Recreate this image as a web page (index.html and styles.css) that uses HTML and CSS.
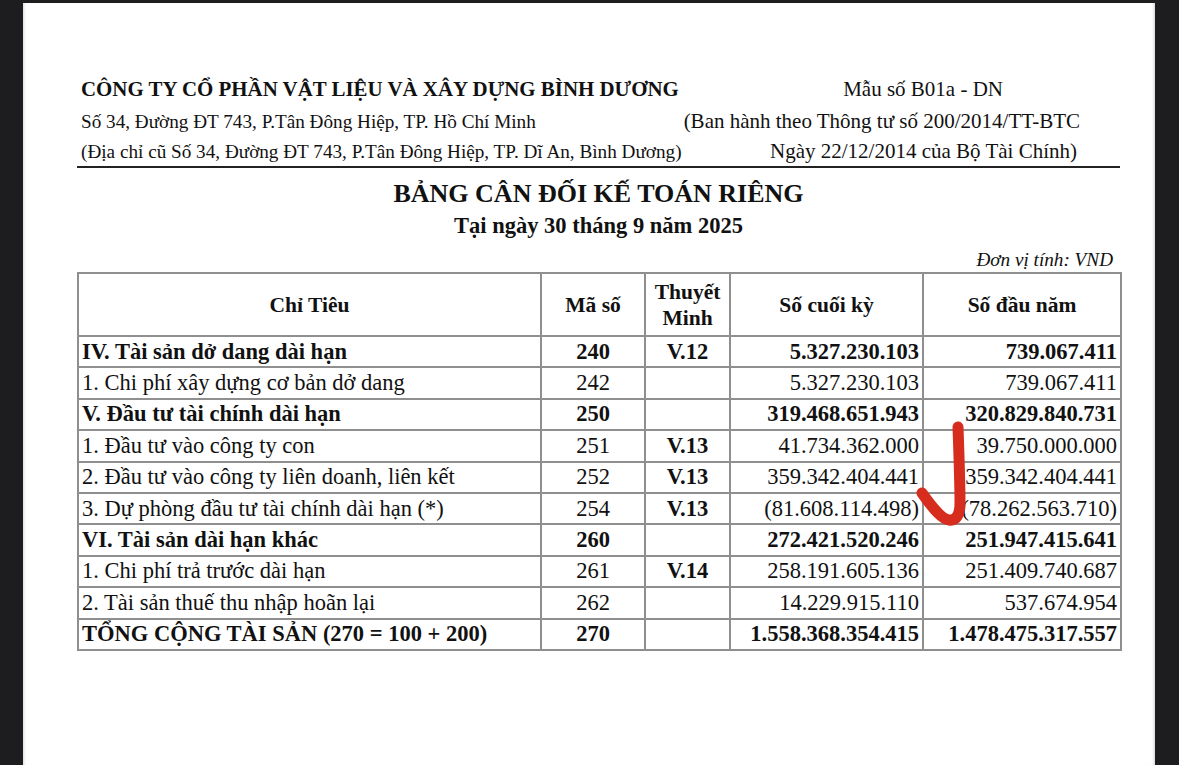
FILE: index.html
```html
<!DOCTYPE html>
<html lang="vi">
<head>
<meta charset="utf-8">
<title>Bảng cân đối kế toán riêng</title>
<link rel="stylesheet" href="styles.css">
</head>
<body>
<div class="page">
  <div class="doc">
    <header class="letterhead">
      <div class="lh-row">
        <span class="company">CÔNG TY CỔ PHẦN VẬT LIỆU VÀ XÂY DỰNG BÌNH DƯƠNG</span>
        <span class="right form-no">Mẫu số B01a - DN</span>
      </div>
      <div class="lh-row">
        <span>Số 34, Đường ĐT 743, P.Tân Đông Hiệp, TP. Hồ Chí Minh</span>
        <span class="right circular">(Ban hành theo Thông tư số 200/2014/TT-BTC</span>
      </div>
      <div class="lh-row lh-last">
        <span>(Địa chỉ cũ Số 34, Đường ĐT 743, P.Tân Đông Hiệp, TP. Dĩ An, Bình Dương)</span>
        <span class="right date">Ngày 22/12/2014 của Bộ Tài Chính)</span>
      </div>
    </header>

    <h1 class="title">BẢNG CÂN ĐỐI KẾ TOÁN RIÊNG</h1>
    <h2 class="subtitle">Tại ngày 30 tháng 9 năm 2025</h2>
    <div class="unit">Đơn vị tính: VND</div>

    <div class="table-wrap">
      <table class="sheet">
        <colgroup>
          <col class="c-name">
          <col class="c-code">
          <col class="c-note">
          <col class="c-end">
          <col class="c-start">
        </colgroup>
        <thead>
          <tr>
            <th>Chỉ Tiêu</th>
            <th>Mã số</th>
            <th>Thuyết<br>Minh</th>
            <th>Số cuối kỳ</th>
            <th>Số đầu năm</th>
          </tr>
        </thead>
        <tbody>
          <tr class="bold">
            <td class="name">IV. Tài sản dở dang dài hạn</td>
            <td class="ctr">240</td><td class="ctr">V.12</td>
            <td class="num">5.327.230.103</td><td class="num">739.067.411</td>
          </tr>
          <tr>
            <td class="name">1. Chi phí xây dựng cơ bản dở dang</td>
            <td class="ctr">242</td><td class="ctr"></td>
            <td class="num">5.327.230.103</td><td class="num">739.067.411</td>
          </tr>
          <tr class="bold">
            <td class="name">V. Đầu tư tài chính dài hạn</td>
            <td class="ctr">250</td><td class="ctr"></td>
            <td class="num">319.468.651.943</td><td class="num">320.829.840.731</td>
          </tr>
          <tr>
            <td class="name">1. Đầu tư vào công ty con</td>
            <td class="ctr">251</td><td class="ctr b">V.13</td>
            <td class="num">41.734.362.000</td><td class="num">39.750.000.000</td>
          </tr>
          <tr>
            <td class="name">2. Đầu tư vào công ty liên doanh, liên kết</td>
            <td class="ctr">252</td><td class="ctr b">V.13</td>
            <td class="num">359.342.404.441</td><td class="num">359.342.404.441</td>
          </tr>
          <tr>
            <td class="name">3. Dự phòng đầu tư tài chính dài hạn (*)</td>
            <td class="ctr">254</td><td class="ctr b">V.13</td>
            <td class="num">(81.608.114.498)</td><td class="num">(78.262.563.710)</td>
          </tr>
          <tr class="bold">
            <td class="name">VI. Tài sản dài hạn khác</td>
            <td class="ctr">260</td><td class="ctr"></td>
            <td class="num">272.421.520.246</td><td class="num">251.947.415.641</td>
          </tr>
          <tr>
            <td class="name">1. Chi phí trả trước dài hạn</td>
            <td class="ctr">261</td><td class="ctr b">V.14</td>
            <td class="num">258.191.605.136</td><td class="num">251.409.740.687</td>
          </tr>
          <tr>
            <td class="name">2. Tài sản thuế thu nhập hoãn lại</td>
            <td class="ctr">262</td><td class="ctr"></td>
            <td class="num">14.229.915.110</td><td class="num">537.674.954</td>
          </tr>
          <tr class="bold">
            <td class="name">TỔNG CỘNG TÀI SẢN (270 = 100 + 200)</td>
            <td class="ctr">270</td><td class="ctr"></td>
            <td class="num">1.558.368.354.415</td><td class="num">1.478.475.317.557</td>
          </tr>
        </tbody>
      </table>
      <svg class="tick" width="80" height="120" viewBox="0 0 80 120" aria-hidden="true">
        <path d="M58 12 C59 40 60 68 60 88 C60 100 56 106 49 105 C42 104 34 95 22 78" fill="none" stroke="#d62d1f" stroke-width="11" stroke-linecap="round" stroke-linejoin="round"/>
      </svg>
    </div>
  </div>
</div>
</body>
</html>
```

FILE: styles.css
```css
html, body {
  margin: 0;
  padding: 0;
}
body {
  background: #1d1d1f;
  width: 1179px;
  height: 765px;
  overflow: hidden;
}
.page {
  margin: 3px 0 0 23px;
  width: 1132px;
  height: 762px;
  background: #fff;
  box-shadow: inset 3px 0 3px -2px #d8d8d8, inset -3px 0 3px -2px #d0d0d0;
  overflow: hidden;
}
.doc {
  padding: 71px 35px 0 54px;
  font-family: "Liberation Serif", "Times New Roman", serif;
  color: #111;
}
.letterhead {
  border-bottom: 2px solid #222;
}
.lh-row {
  display: flex;
  justify-content: space-between;
  align-items: baseline;
  font-size: 19.2px;
  line-height: 31.5px;
  padding-left: 4px;
}
.lh-last {
  line-height: 29px;
}
.company {
  font-weight: bold;
  font-size: 20.9px;
}
.right { font-size: 21px; }
.form-no { margin-right: 117px; }
.circular { margin-right: 40px; }
.date { margin-right: 43px; }
.title {
  margin: 10px 0 0;
  text-align: center;
  font-size: 26px;
  line-height: 32px;
  font-weight: bold;
}
.subtitle {
  margin: 0;
  text-align: center;
  font-size: 22.5px;
  line-height: 32px;
  font-weight: bold;
}
.unit {
  text-align: right;
  font-style: italic;
  font-size: 19.2px;
  line-height: 20px;
  margin: 8px 0 2px;
  padding-right: 7px;
}
.table-wrap {
  position: relative;
}
.sheet {
  border-collapse: collapse;
  width: 1043px;
  table-layout: fixed;
  font-size: 22.5px;
}
.c-name { width: 463px; }
.c-code { width: 104px; }
.c-note { width: 85px; }
.c-end { width: 193px; }
.c-start { width: 198px; }
.sheet th, .sheet td {
  border: 2px solid #8f8f8f;
  padding: 0 3px;
}
.sheet th {
  height: 61px;
  font-weight: bold;
  font-size: 21.5px;
  text-align: center;
  line-height: 26px;
}
.sheet td {
  height: 29.4px;
  line-height: 26px;
  white-space: nowrap;
}
.sheet .bold td { font-weight: bold; }
.sheet td.b { font-weight: bold; }
.ctr { text-align: center; }
.num { text-align: right; }
.tick {
  position: absolute;
  left: 823px;
  top: 143px;
}
```
